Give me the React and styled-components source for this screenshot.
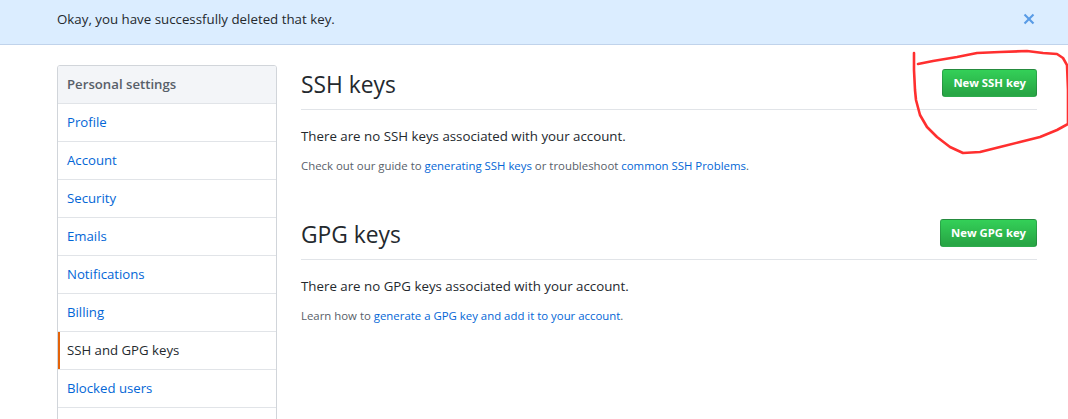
import React from "react";
import styled, { createGlobalStyle } from "styled-components";

const FONT = `"Open Sans", "Noto Sans", "Liberation Sans", sans-serif`;

const Global = createGlobalStyle`
  html, body { margin: 0; padding: 0; background: #fff; }
  body { font-family: ${FONT}; color: #24292e; overflow: hidden; }
  * { box-sizing: border-box; }
`;

const Page = styled.div`
  position: relative;
  width: 1068px;
  height: 419px;
  overflow: hidden;
`;

const Flash = styled.div`
  height: 45px;
  background: #dbedff;
  border-bottom: 1px solid #c0d3eb;
`;

const FlashInner = styled.div`
  width: 980px;
  margin-left: 57px;
  height: 44px;
  display: flex;
  align-items: center;
  justify-content: space-between;
  padding-bottom: 6px;
  font-size: 13.3px;
  line-height: 20px;
  color: #24292e;
`;

const CloseBtn = styled.button`
  border: 0;
  background: none;
  padding: 0;
  margin-right: 2px;
  display: flex;
  color: #0366d6;
  opacity: 0.6;
  cursor: pointer;
`;

const Container = styled.div`
  width: 980px;
  margin-left: 57px;
  margin-top: 20px;
  display: flex;
  gap: 24px;
  align-items: flex-start;
`;

const Menu = styled.nav`
  width: 220px;
  flex: none;
  min-height: 420px;
  border: 1px solid #d1d5da;
  border-radius: 3px 3px 0 0;
  background: #fff;
`;

const MenuHeading = styled.div`
  padding: 8px 9px;
  font-size: 13.2px;
  line-height: 21px;
  font-weight: 600;
  color: #586069;
  background: #f3f5f8;
  border-bottom: 1px solid #e1e4e8;
  border-radius: 2px 2px 0 0;
`;

const MenuItem = styled.a`
  display: block;
  padding: 8px 9px;
  font-size: 13.2px;
  line-height: 21px;
  text-decoration: none;
  border-bottom: 1px solid #e1e4e8;
  color: ${(p) => (p.$selected ? "#24292e" : "#0366d6")};
  box-shadow: ${(p) => (p.$selected ? "inset 2px 0 0 #e36209" : "none")};
`;

const Main = styled.main`
  flex: 1;
  min-width: 0;
`;

const Subhead = styled.div`
  display: flex;
  align-items: center;
  padding-bottom: 8px;
  margin-bottom: 16px;
  border-bottom: 1px solid #e1e4e8;
  margin-top: ${(p) => (p.$spacious ? "40px" : "0")};
`;

const SubheadTitle = styled.h2`
  flex: 1;
  margin: 0;
  padding-top: 3px;
  font-size: 22.8px;
  line-height: 33px;
  font-weight: 400;
  color: #24292e;
`;

const PrimaryButton = styled.button`
  font-family: ${FONT};
  font-size: 11.3px;
  font-weight: 700;
  line-height: 20px;
  padding: 3px 10px;
  color: #fff;
  background: linear-gradient(-180deg, #34d058 0%, #28a745 90%);
  border: 1px solid rgba(27, 31, 35, 0.2);
  border-radius: 3px;
  cursor: pointer;
  white-space: nowrap;
`;

const Blank = styled.p`
  margin: 0 0 10px;
  font-size: 13.3px;
  line-height: 21px;
  color: #24292e;
`;

const Note = styled.p`
  margin: 0;
  font-size: 11.4px;
  line-height: 18px;
  color: #586069;
`;

const Link = styled.a`
  color: #0366d6;
  text-decoration: none;
`;

const Annotation = styled.svg`
  position: absolute;
  left: 0;
  top: 0;
  pointer-events: none;
`;

const XIcon = () => (
  <svg width="12" height="16" viewBox="0 0 12 16" fill="currentColor">
    <path d="M7.48 8l3.75 3.75-1.48 1.48L6 9.48l-3.75 3.75-1.48-1.48L4.52 8 .77 4.25l1.48-1.48L6 6.52l3.75-3.75 1.48 1.48L7.48 8z" />
  </svg>
);

const items = [
  "Profile",
  "Account",
  "Security",
  "Emails",
  "Notifications",
  "Billing",
  "SSH and GPG keys",
  "Blocked users",
];

export default function App() {
  return (
    <Page>
      <Global />
      <Flash>
        <FlashInner>
          <span>Okay, you have successfully deleted that key.</span>
          <CloseBtn aria-label="Close">
            <XIcon />
          </CloseBtn>
        </FlashInner>
      </Flash>
      <Container>
        <Menu>
          <MenuHeading>Personal settings</MenuHeading>
          {items.map((it) => (
            <MenuItem key={it} href="#" $selected={it === "SSH and GPG keys"}>
              {it}
            </MenuItem>
          ))}
        </Menu>
        <Main>
          <Subhead>
            <SubheadTitle>SSH keys</SubheadTitle>
            <PrimaryButton>New SSH key</PrimaryButton>
          </Subhead>
          <Blank>There are no SSH keys associated with your account.</Blank>
          <Note>
            Check out our guide to <Link href="#">generating SSH keys</Link> or troubleshoot{" "}
            <Link href="#">common SSH Problems</Link>.
          </Note>
          <Subhead $spacious>
            <SubheadTitle>GPG keys</SubheadTitle>
            <PrimaryButton>New GPG key</PrimaryButton>
          </Subhead>
          <Blank>There are no GPG keys associated with your account.</Blank>
          <Note>
            Learn how to <Link href="#">generate a GPG key and add it to your account</Link>.
          </Note>
        </Main>
      </Container>
      <Annotation width="1068" height="419" viewBox="0 0 1068 419">
        <path
          d="M918,64 L933,61 L957,57 L977,53 L1000,52 L1027,51 L1043,53 L1057,54 L1063,58 L1067,65 L1068,90 L1068,124 L1057,130 L1040,137 L1020,142 L1000,147 L980,152 L963,153 L950,147 L937,137 L927,127 L920,115 L916,100 L915,90 L914,70 L914,53"
          fill="none"
          stroke="#ff2f2f"
          strokeWidth="2.6"
          strokeLinejoin="round"
          strokeLinecap="round"
        />
      </Annotation>
    </Page>
  );
}
